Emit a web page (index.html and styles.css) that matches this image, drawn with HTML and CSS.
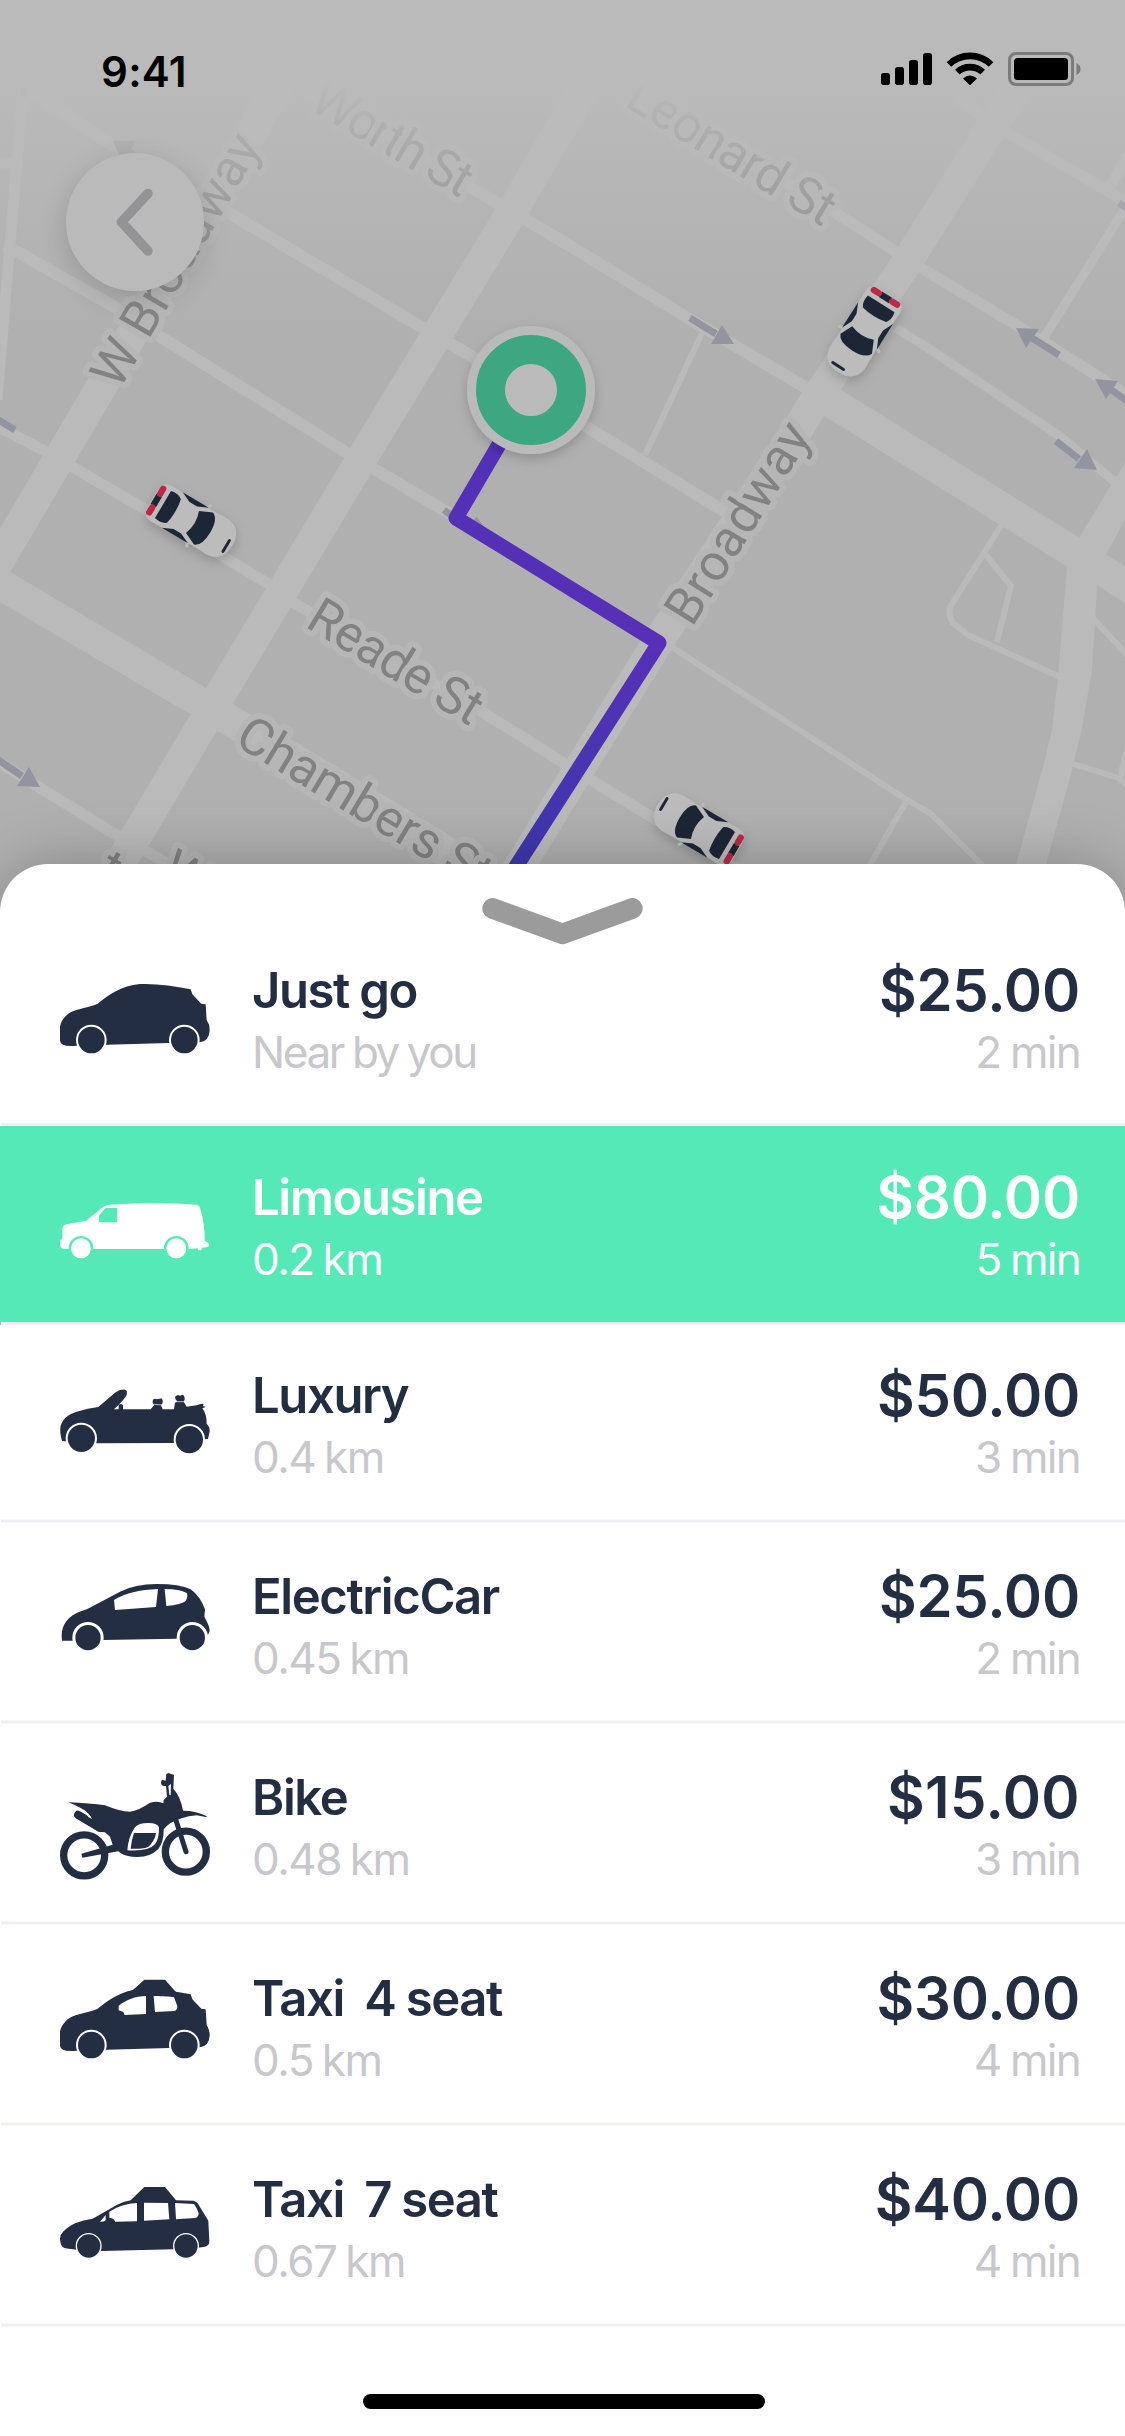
FILE: index.html
```html
<!DOCTYPE html>
<html lang="en">
<head>
<meta charset="utf-8">
<title>Choose a ride</title>
<link rel="stylesheet" href="styles.css">
</head>
<body>
<main class="screen">
  <section class="map">
    <svg class="map-canvas" viewBox="0 0 1125 920" width="1125" height="920">
      <defs>
        <linearGradient id="route" gradientUnits="userSpaceOnUse" x1="0" y1="440" x2="0" y2="870">
          <stop offset="0" stop-color="#5131b7"/><stop offset=".47" stop-color="#5730b7"/><stop offset="1" stop-color="#3d38ac"/>
        </linearGradient>
        <linearGradient id="fade" x1="0" y1="0" x2="0" y2="1">
          <stop offset="0" stop-color="#bababa"/><stop offset=".24" stop-color="#bababa"/><stop offset="1" stop-color="#bababa" stop-opacity="0"/>
        </linearGradient>
        <filter id="shadow" x="-40%" y="-40%" width="180%" height="180%"><feDropShadow dx="0" dy="5" stdDeviation="6" flood-opacity=".18"/></filter>
        <g id="car">
          <path d="M-21 -36Q-21 -47 -10 -47H10Q21 -47 21 -36L20 -8L21 30Q19 47 0 47Q-19 47 -21 30L-20 -8Z" fill="#bcbcbc"/>
          <path d="M-25 8L-19 5M25 8L19 5" stroke="#bcbcbc" stroke-width="2.5"/>
          <path d="M-16 -35H16Q18 -27 14 -22Q0 -19 -14 -22Q-18 -27 -16 -35ZM-13 0Q0 5 13 0L19 13Q16 21 0 21Q-16 21 -19 13ZM-21 -24L-16 -13V-4L-21 7ZM21 -24L16 -13V-4L21 7Z" fill="#1f2836"/>
          <path d="M-6 -43H6" stroke="#1f2836" stroke-width="6.5"/>
          <path d="M-14 -43H-8M8 -43H14" stroke="#ba2947" stroke-width="6.5" stroke-linecap="round"/>
          <path d="M-10 42H3" stroke="#1f2836" stroke-width="3" stroke-linecap="round"/>
        </g>
      </defs>

      <g class="roads">
        <path class="w30" d="M300 49L-20 593"/>
        <path class="w30" d="M618 30L513 210L373 440L217 700L137 835L100 897"/>
        <path class="w30" d="M1040 52L990 130L905 265L822 390L791 440L661 637L581 766L515 874"/>
        <path class="w30" d="M828 400L1073 552L1135 591"/>
        <path class="w30" d="M-10 578L198 701L510 890"/>
        <path class="w12" d="M280 75L487 197L562 241L688 318L830 402"/>
        <path class="w12" d="M20 84L115 147L229 213L423 328L473 357L598 434L740 521"/>
        <path class="w12" d="M5 245L115 307L154 333L349 454L457 518L657 643"/>
        <path class="w10" d="M-5 425L43 450L143 508L267 583L294 603L484 713L591 780L735 868"/>
        <path class="w10" d="M-5 760L118 836L190 876"/>
        <path class="w10" d="M24 80L10 243L-3 400M-5 163H14"/>
        <path class="w10" d="M612 75L842 217L921 268L1036 337L1130 397"/>
        <path class="w10" d="M955 98L1003 130L1130 204"/>
        <path class="w10" d="M1106 194L1128 155"/>
        <path class="w8" d="M1124 210L1043 339M896 328L928 348L1061 437L1115 482"/>
        <path class="w5" d="M702 333L645 455M667 644L907 800L930 813L990 873M907 800L866 872M1002 524L984 553L950 607Q948 614 953 623L968 635L1060 677M984 553L1011 586L997 642M1090 615L1130 658M1070 763L1119 778L1128 786M1120 778L1128 745"/>
        <path class="area" d="M1079 538L1110 487L1130 455V510L1106 555L1097 587L1092 670L1081 733L1072 770L1044 872H1014L1043 767L1052 730L1058 677L1067 568Z"/>
      </g>

      <g class="arrows">
        <path d="M690 318L716 334M1032 338L1059 355M1110 389L1130 403M1056 441L1079 459M-3 759L22 776M-3 419L15 430M444 510L452 516M1119 203L1128 209M24 88V97"/>
        <path class="head" d="M734 344L722 325L711 344ZM1016 328L1039 329L1026 348ZM1095 379L1118 381L1106 399ZM1097 470L1087 449L1074 468ZM40 787L29 767L17 786ZM113 141H136L131 149L140 155H119ZM477 517L484 527L464 527Z"/>
      </g>

      <g class="streets">
        <text transform="translate(307 108) rotate(30.5)" textLength="178">Worth St</text>
        <text transform="translate(623 105) rotate(31.4)" textLength="234">Leonard St</text>
        <text transform="translate(119 391) rotate(-59.8)" textLength="284">W Broadway</text>
        <text transform="translate(692 628) rotate(-58)" textLength="227">Broadway</text>
        <text transform="translate(304 626) rotate(31.2)" textLength="194">Reade St</text>
        <text transform="translate(233 744) rotate(31)" textLength="288">Chambers St</text>
        <text transform="translate(95 878) rotate(31)">t</text>
        <text transform="translate(158 878) rotate(31)">W</text>
      </g>

      <rect width="1125" height="330" fill="url(#fade)"/>
      <path d="M531 390L456 518L659 643L510 876" fill="none" stroke="url(#route)" stroke-width="15" stroke-linejoin="round"/>
      <g filter="url(#shadow)"><circle cx="531" cy="390" r="64" fill="#bababa"/></g>
      <circle cx="531" cy="390" r="40.5" fill="none" stroke="#3da782" stroke-width="29"/>
      <g filter="url(#shadow)"><use href="#car" transform="translate(863 333) rotate(32.2) scale(.98)"/></g>
      <g filter="url(#shadow)"><use href="#car" transform="translate(192.5 522) rotate(-59.4) scale(.98)"/></g>
      <g filter="url(#shadow)"><use href="#car" transform="translate(697.5 828) rotate(120.6) scale(.98)"/></g>
    </svg>

    <header class="status-bar">
      <span class="clock">9:41</span>
      <svg class="status-icons" viewBox="881 50 200 38" width="200" height="38">
        <rect x="881" y="73" width="9" height="12" rx="2.8"/><rect x="895" y="67" width="9" height="18" rx="2.8"/><rect x="909" y="60" width="9" height="25" rx="2.8"/><rect x="923" y="53" width="9" height="32" rx="2.8"/>
        <path d="M949 64.5A30 30 0 0 1 991 64.5M957.3 72.2A18.5 18.5 0 0 1 982.7 72.2" fill="none" stroke="#000" stroke-width="6.6"/>
        <path d="M963 78.500Q970 72.500 977 78.500L970 85.200Z"/>
        <rect x="1009.500" y="53.500" width="63" height="31" rx="6.500" fill="none" stroke="#7b7b7b" stroke-width="3"/>
        <rect x="1014" y="58" width="54" height="22" rx="3.500"/>
        <path d="M1076.500 63Q1080.500 65 1080.500 69T1076.500 75Z" fill="#7b7b7b"/>
      </svg>
    </header>

    <button class="back" aria-label="Back">
      <svg viewBox="0 0 138 138" width="138" height="138"><path d="M82 40.500L55.500 69L82 98" fill="none" stroke="#939396" stroke-width="9.500" stroke-linecap="round" stroke-linejoin="round"/></svg>
    </button>
  </section>

  <section class="sheet">
    <svg class="handle" viewBox="66 143 482 140" width="161" height="47"><path d="M98 174L307 250L516 174" fill="none" stroke="#9b9b9b" stroke-width="62" stroke-linecap="round" stroke-linejoin="round"/></svg>
    <ul class="rides">
      <li class="ride ride-first">
        <svg class="icon" viewBox="60 -6 450 360">
          <g id="hatch"><path d="M60 242V200C62 185 75 165 95 155C115 147 145 142 172 132C200 108 245 76 300 72C350 70 400 78 452 88L457 103L484 131L497 133L500 180Q510 195 509 212Q507 243 480 247L388 249L201 254L110 257Q62 262 60 242Z"/>
          <circle class="wheel" cx="154" cy="240" r="43"/><circle class="wheel" cx="433" cy="240" r="43"/></g>
        </svg>
        <div class="info"><span class="name">Just go</span><span class="sub sub-note">Near by you</span></div>
        <div class="fare"><span class="price">$25.00</span><span class="sub">2 min</span></div>
      </li>
      <li class="ride ride-selected">
        <svg class="icon" viewBox="60 615 450 360">
          <path d="M67 838V805Q70 795 80 793L138 782L190 740Q195 735 210 734Q340 724 470 734Q478 736 480 744Q495 790 494 842L504 848Q510 854 504 861L486 863L484 871H475L473 865L447 867H72Q60 866 60 852V840Z"/>
          <path class="glass" d="M177 766L197 744H232L231 787H177Z"/>
          <circle class="wheel" cx="123" cy="865" r="33.500"/><circle class="wheel" cx="409" cy="865" r="33.500"/>
        </svg>
        <div class="info"><span class="name">Limousine</span><span class="sub">0.2 km</span></div>
        <div class="fare"><span class="price">$80.00</span><span class="sub">5 min</span></div>
      </li>
      <li class="ride ride-short">
        <svg class="icon" viewBox="60 8 450 360">
          <path d="M66 242Q58 215 62 195L70 180Q80 163 110 154Q145 143 175 140L225 97Q240 86 255 88Q263 90 260 103Q256 115 222 147H236V135Q243 127 249 135V147H332L342 135L338 128Q337 117 343 115L352 117L364 114Q370 118 368 128L363 135L368 147H402L405 127L412 123Q404 118 406 108L414 104L420 106L428 103Q435 107 434 118L431 124L440 139L470 135Q485 128 491 131L489 137L497 140L487 144Q500 160 500 190Q510 200 509 213L504 236L494 237L402 248L170 249L76 243Z"/>
          <path class="slit" d="M340 132L368 134M405 124H436"/>
          <circle class="wheel" cx="124" cy="234" r="44"/><circle class="wheel" cx="448" cy="238" r="44"/>
        </svg>
        <div class="info"><span class="name">Luxury</span><span class="sub">0.4 km</span></div>
        <div class="fare"><span class="price">$50.00</span><span class="sub">3 min</span></div>
      </li>
      <li class="ride">
        <svg class="icon wide-arch" viewBox="60 612 450 360">
          <path d="M66 842Q62 815 72 795Q85 770 115 757Q140 750 165 735L240 695Q285 672 350 672Q420 672 452 688Q480 708 495 748L493 770Q510 800 509 812L505 823L490 834L410 836L190 840L98 842Z"/>
          <path class="glass" d="M222 720Q270 690 354 687L348 741L225 750ZM374 687Q420 687 440 699Q446 708 436 724Q425 734 379 738Z"/>
          <circle class="wheel" cx="144" cy="833" r="42.500"/><circle class="wheel" cx="457" cy="833" r="42.500"/>
        </svg>
        <div class="info"><span class="name">ElectricCar</span><span class="sub">0.45 km</span></div>
        <div class="fare"><span class="price">$25.00</span><span class="sub">2 min</span></div>
      </li>
      <li class="ride">
        <svg class="icon" viewBox="60 45 450 360">
          <circle class="tyre" cx="132.500" cy="316" r="61.500"/><circle class="tyre" cx="437.500" cy="305" r="61.500"/>
          <path d="M85 157Q150 160 195 166Q240 185 270 185Q295 182 330 158Q355 152 370 160L371 150L381 140L378 108Q362 110 363 96L366 89L377 92L379 72L385 69L402 75L400 116Q422 140 429 182Q470 182 501 199L497 201L470 196Q445 197 425 205Q390 215 371 238Q372 275 355 297Q330 322 290 321Q260 320 245 311L235 304L127 323L124 311L218 284L210 260L195 247L175 245L105 203L120 186L155 207Q145 180 85 157Z"/>
          <path class="muffler" d="M114 194L180 233"/>
          <path class="fork" d="M407 208L438 305"/>
          <path class="glass" d="M262 301Q265 260 285 232Q295 219 325 219Q352 219 357 232Q358 265 345 283Q325 305 262 301ZM385 108L393 102L392 136L388 134ZM128 178Q148 190 156 207L146 202Z"/>
          <path d="M282 249H348Q345 272 325 290Q310 298 272 296Q274 270 282 249Z"/>
        </svg>
        <div class="info"><span class="name">Bike</span><span class="sub">0.48 km</span></div>
        <div class="fare"><span class="price price-narrow">$15.00</span><span class="sub">3 min</span></div>
      </li>
      <li class="ride">
        <svg class="icon" viewBox="60 648 450 360">
          <use href="#hatch" y="645"/>
          <path d="M255 728L278 721L313 689H375L407 725L430 740Z"/>
          <path class="glass" d="M236 767C260 750 285 738 318 738V792L254 795L250 786L236 781ZM341 738C370 739 390 739 402 742L412 768Q412 782 403 783L345 786Z"/>
        </svg>
        <div class="info"><span class="name">Taxi  4 seat</span><span class="sub">0.5 km</span></div>
        <div class="fare"><span class="price">$30.00</span><span class="sub">4 min</span></div>
      </li>
      <li class="ride">
        <svg class="icon thin-arch" viewBox="60 21 450 360">
          <path d="M62 250Q58 235 62 225Q75 205 105 190Q130 180 158 176L230 135Q250 124 272 121L313 81H375L408 121L460 122Q470 124 475 133L505 182L508 245Q508 256 495 260L475 263L400 268L185 273L110 269L75 265Q65 262 62 250Z"/>
          <path class="glass" d="M180 185L197 165V180Q195 186 180 185ZM208 155Q245 131 291 129V184L226 185Q222 175 208 173ZM312 128L384 129L388 178L312 182ZM405 129L462 132Q472 145 476 160Q475 173 466 174L408 178Z"/>
          <circle class="wheel" cx="146" cy="258" r="37"/><circle class="wheel" cx="438" cy="258" r="37"/>
        </svg>
        <div class="info"><span class="name">Taxi  7 seat</span><span class="sub">0.67 km</span></div>
        <div class="fare"><span class="price">$40.00</span><span class="sub">4 min</span></div>
      </li>
    </ul>
    <div class="home-indicator"></div>
  </section>
</main>
</body>
</html>
```
FILE: styles.css
```css
* { box-sizing: border-box; }

body {
  margin: 0;
  font-family: Inter, "Liberation Sans", sans-serif;
  color: #242e42;
  background: #fff;
}

.screen {
  display: flex;
  flex-direction: column;
  width: 1125px;
  height: 2436px;
  overflow: hidden;
}

/* Map */
.map {
  position: relative;
  flex: none;
  height: 864px;
  background: #b0b0b0;
}
.map-canvas { position: absolute; inset: 0; background: #b0b0b0; }

.roads path { fill: none; stroke: #bababa; stroke-linejoin: round; }
.roads .w30 { stroke-width: 31px; }
.roads .w12 { stroke-width: 12px; }
.roads .w10 { stroke-width: 11px; }
.roads .w8 { stroke-width: 9px; }
.roads .w5 { stroke-width: 6px; }
.roads .area { fill: #bababa; stroke: none; }

.arrows path { fill: none; stroke: #9295a0; stroke-width: 7px; }
.arrows .head { fill: #9295a0; stroke: none; }

.streets {
  font: 400 51px Roboto, sans-serif;
  fill: #828282;
  stroke: #b6b6b6;
  stroke-width: 12px;
  stroke-linejoin: round;
  paint-order: stroke;
}

.status-bar {
  position: absolute;
  inset: 0 0 auto;
  display: flex;
  justify-content: space-between;
  padding: 50px 44px 0 101px;
}
.clock { font-size: 42px; font-weight: 600; line-height: 44px; color: #000; letter-spacing: 0.3px; }

.back {
  position: absolute;
  top: 153px;
  left: 66px;
  width: 138px;
  height: 138px;
  padding: 0;
  border: 0;
  border-radius: 50%;
  background: #bababa;
  box-shadow: 0 8px 28px rgba(0, 0, 0, .16);
}
.back svg { display: block; }

/* Ride list */
.sheet {
  position: relative;
  flex: 1;
  display: flex;
  flex-direction: column;
  align-items: center;
  background: #fff;
  border-radius: 48px 48px 0 0;
  box-shadow: 0 0 60px rgba(0, 0, 0, .25);
}
.handle { flex: none; margin: 34px 0 -81px; overflow: visible; }

.rides { width: 100%; margin: 0; padding: 0; list-style: none; }

.ride {
  position: relative;
  display: flex;
  align-items: flex-end;
  height: 201px;
  padding: 0 45px 34px 60px;
}
.ride::after {
  content: "";
  position: absolute;
  inset: auto 0 0 1px;
  height: 4px;
  background: linear-gradient(#f8f8fb 25%, #efeff4 25% 75%, #f8f8fb 75%);
}
.ride-first { height: 262px; padding-bottom: 42px; }
.ride-selected { height: 199px; background: #56e9b8; color: #fff; }
.ride-short { height: 198px; }
.ride-first::after, .ride-selected::after { height: 3px; background: #efeff4; }

.icon {
  flex: none;
  width: 150px;
  height: 120px;
  margin: 0 42px 6px 0;
  fill: #242e42;
  overflow: visible;
}
.ride-selected .icon { fill: #fff; }
.wheel { stroke: #fff; stroke-width: 6px; }
.wide-arch .wheel { stroke-width: 9px; }
.thin-arch .wheel { stroke-width: 4px; }
.ride-selected .wheel { stroke: #56e9b8; stroke-width: 7px; }
.glass { fill: #fff; }
.ride-selected .glass { fill: #56e9b8; }
.slit { fill: none; stroke: #fff; stroke-width: 2px; }
.tyre { fill: none; stroke: #242e42; stroke-width: 22px; }
.muffler, .fork { fill: none; stroke: #242e42; stroke-width: 24px; stroke-linecap: round; }
.fork { stroke-width: 15px; }

.info, .fare { display: flex; flex-direction: column; white-space: pre; }
.info { flex: 1; }
.fare { align-items: flex-end; }

.name {
  padding-top: 1px;
  font-size: 49px;
  font-weight: 600;
  line-height: 60px;
  letter-spacing: -1.4px;
  word-spacing: -0.8px;
}
.info .sub { margin-top: -1px; }
.price { font-size: 58px; font-weight: 600; line-height: 60px; letter-spacing: -0.2px; }
.price-narrow { letter-spacing: 0.4px; }
.sub {
  font-size: 44px;
  line-height: 64px;
  color: #c8c7cc;
  letter-spacing: -1.7px;
  word-spacing: -1.2px;
}
.info .sub { letter-spacing: -1.5px; word-spacing: -2px; }
.info .sub-note { letter-spacing: -2.4px; word-spacing: -1px; }
.ride-selected .sub { color: #fff; }

.home-indicator {
  width: 402px;
  height: 15px;
  margin: auto 0 27px 2px;
  border-radius: 8px;
  background: #000;
}
```
